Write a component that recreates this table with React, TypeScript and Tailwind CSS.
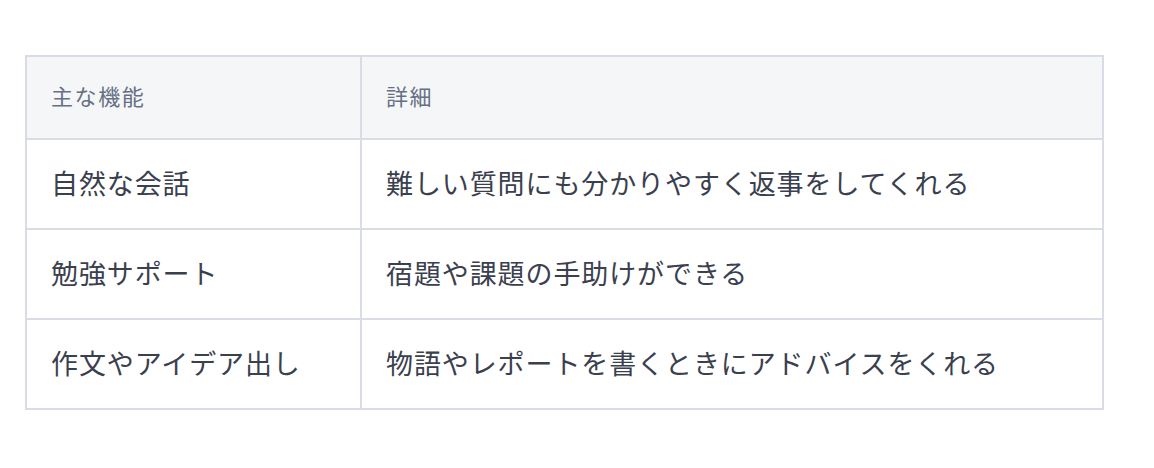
const rows = [
  { feature: '自然な会話', detail: '難しい質問にも分かりやすく返事をしてくれる' },
  { feature: '勉強サポート', detail: '宿題や課題の手助けができる' },
  { feature: '作文やアイデア出し', detail: '物語やレポートを書くときにアドバイスをくれる' },
];

export default function App() {
  return (
    <div
      className="min-h-[468px] bg-white pl-[25px] pt-[55px]"
      style={{ fontFamily: '"Noto Sans CJK JP", "Noto Sans", sans-serif' }}
    >
      <table className="w-[1079px] border-collapse border-2 border-[#d9dce4] text-left">
        <thead>
          <tr className="h-[83px] bg-[#f5f6f8]">
            <th className="w-[335px] border-2 border-[#d9dce4] pb-[4px] pl-[24px] text-[22px] font-normal tracking-[1.6px] text-[#667085]">
              主な機能
            </th>
            <th className="border-2 border-[#d9dce4] pb-[4px] pl-[24px] text-[22px] font-normal tracking-[1.6px] text-[#667085]">
              詳細
            </th>
          </tr>
        </thead>
        <tbody>
          {rows.map((r) => (
            <tr key={r.feature} className="h-[90px]">
              <td className="border-2 border-[#d9dce4] pb-[1px] pl-[24px] text-[27px] tracking-[0.9px] text-[#3a404e]">
                {r.feature}
              </td>
              <td className="border-2 border-[#d9dce4] pb-[1px] pl-[24px] text-[27px] tracking-[0.9px] text-[#3a404e]">
                {r.detail}
              </td>
            </tr>
          ))}
        </tbody>
      </table>
    </div>
  );
}
